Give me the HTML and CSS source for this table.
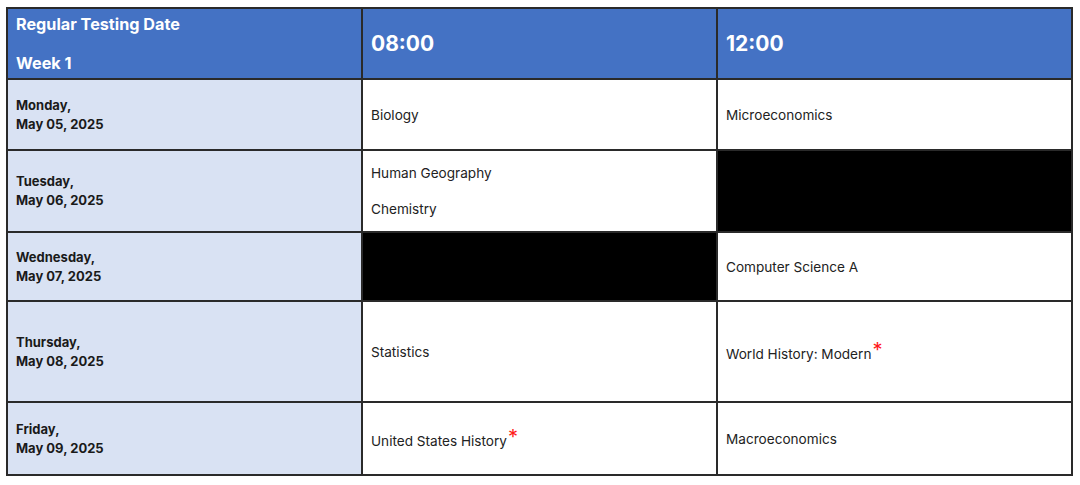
FILE: index.html
```html
<!DOCTYPE html>
<html lang="en">
<head>
<meta charset="utf-8">
<title>Regular Testing Date - Week 1</title>
<link rel="stylesheet" href="styles.css">
</head>
<body>
<div class="page">
  <table class="schedule">
    <colgroup>
      <col class="c-date">
      <col class="c-slot">
      <col class="c-slot">
    </colgroup>
    <thead>
      <tr class="r-head">
        <th class="h-title">
          <div class="title-stack">
            <span>Regular Testing Date</span>
            <span>Week 1</span>
          </div>
        </th>
        <th class="h-time">08:00</th>
        <th class="h-time">12:00</th>
      </tr>
    </thead>
    <tbody>
      <tr class="r1">
        <td class="date">Monday,<br>May 05, 2025</td>
        <td class="exam">Biology</td>
        <td class="exam">Microeconomics</td>
      </tr>
      <tr class="r2">
        <td class="date">Tuesday,<br>May 06, 2025</td>
        <td class="exam">
          <div class="exam-stack">
            <span>Human Geography</span>
            <span>Chemistry</span>
          </div>
        </td>
        <td class="blocked"></td>
      </tr>
      <tr class="r3">
        <td class="date">Wednesday,<br>May 07, 2025</td>
        <td class="blocked"></td>
        <td class="exam">Computer Science A</td>
      </tr>
      <tr class="r4">
        <td class="date">Thursday,<br>May 08, 2025</td>
        <td class="exam">Statistics</td>
        <td class="exam marked">World History: Modern<sup class="star">*</sup></td>
      </tr>
      <tr class="r5">
        <td class="date">Friday,<br>May 09, 2025</td>
        <td class="exam marked">United States History<sup class="star">*</sup></td>
        <td class="exam">Macroeconomics</td>
      </tr>
    </tbody>
  </table>
</div>
</body>
</html>
```

FILE: styles.css
```css
html, body {
  margin: 0;
  padding: 0;
  background: #ffffff;
}

.page {
  padding: 7px 6px;
  font-family: Inter, "Liberation Sans", Arial, sans-serif;
  color: #1f1f1f;
}

.schedule {
  width: 1066px;
  border-collapse: collapse;
  table-layout: fixed;
  border: 2px solid #3a3a3a;
}

.c-date { width: 355px; }
.c-slot { width: 355px; }

.schedule th,
.schedule td {
  border: 2px solid #2a2a2a;
  padding: 0 0 0 8px;
  vertical-align: middle;
  text-align: left;
}

.schedule th {
  background: #4472c4;
  color: #ffffff;
  font-weight: 700;
}

.r-head { height: 71px; }
.r1 { height: 71px; }
.r2 { height: 82px; }
.r3 { height: 69px; }
.r4 { height: 101px; }
.r5 { height: 73px; }

.title-stack {
  display: flex;
  flex-direction: column;
  gap: 20px;
  font-size: 16.2px;
  line-height: 19px;
}

.h-time {
  font-size: 21px;
  padding-top: 4px;
}

.date {
  background: #d9e2f3;
  font-weight: 700;
  font-size: 13px;
  line-height: 19px;
  color: #1a1a1a;
}

.exam {
  font-size: 13.6px;
  line-height: 18px;
  color: #222222;
}

.schedule td.marked {
  padding-top: 4px;
}

.exam-stack {
  display: flex;
  flex-direction: column;
  gap: 18px;
}

.blocked {
  background: #000000;
}

.star {
  color: #ff1a1a;
  font-size: 20px;
  font-weight: 400;
  line-height: 0;
  vertical-align: 2px;
  margin-left: 1px;
}
```
